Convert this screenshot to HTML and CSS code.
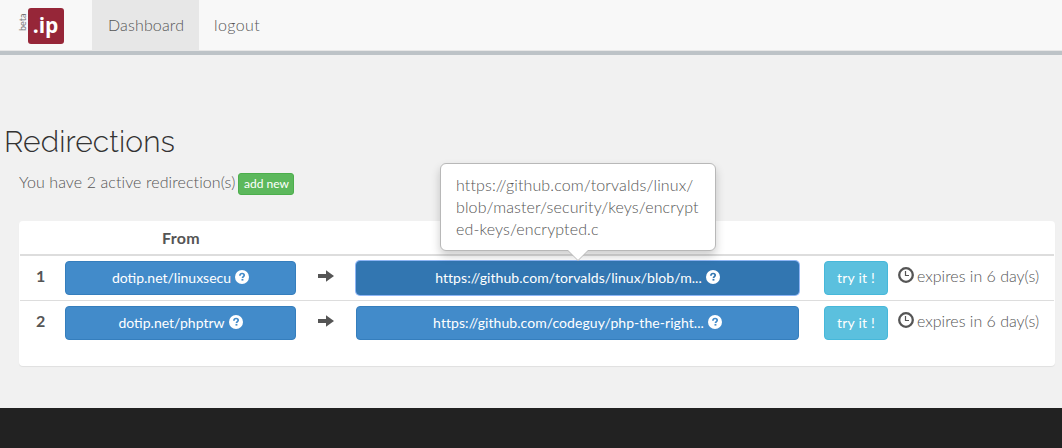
FILE: index.html
```html
<!DOCTYPE html>
<html lang="en">
<head>
<meta charset="utf-8">
<title>Redirections</title>
<link rel="stylesheet" href="styles.css">
</head>
<body>
<svg width="0" height="0" class="defs">
  <symbol id="help" viewBox="0 0 14 14"><circle cx="7" cy="7" r="7" fill="#fff"/><path d="M4.9 5.8C4.9 4.2 5.8 3.5 7.1 3.5c1.3 0 2.1.7 2.1 1.7 0 1.3-1.7 1.4-1.7 2.8" fill="none" stroke="currentColor" stroke-width="1.7"/><path d="M6.5 8.9h1.9v1.7H6.5z" fill="currentColor"/></symbol>
  <symbol id="arrow" viewBox="0 0 16 12"><path d="M0 4h8V0.200L16 6 8 11.800V8H0z" fill="#555"/></symbol>
  <symbol id="clock" viewBox="0 0 16 16"><circle cx="8" cy="8" r="6.800" fill="none" stroke="#555" stroke-width="2.300"/><path d="M7.500 4v4.500H11" fill="none" stroke="#555" stroke-width="1.200"/></symbol>
</svg>
<nav class="navbar">
  <a class="brand"><span class="beta">beta</span><span class="logo"><span class="logo-text">.ip</span></span></a>
  <a class="nav-item active"><span class="dash">Dashboard</span></a>
  <a class="nav-item"><span class="logout">logout</span></a>
</nav>
<main>
  <h1><span>Redirections</span></h1>
  <p class="summary"><span class="count">You have 2 active redirection(s)</span><a class="btn add">add new</a></p>
  <section class="card">
    <div class="row head"><span></span><span class="from">From</span></div>
    <div class="row">
      <b>1</b>
      <a class="btn primary"><span>dotip.net/linuxsecu</span><svg class="help"><use href="#help"/></svg></a>
      <svg class="arrow"><use href="#arrow"/></svg>
      <div class="target">
        <a class="btn primary focused"><span>https://github.com/torvalds/linux/blob/m...</span><svg class="help"><use href="#help"/></svg></a>
        <div class="popover">https://github.com/torvalds/linux/<br>blob/master/security/keys/encrypt<br>ed-keys/encrypted.c</div>
      </div>
      <a class="btn info">try it !</a>
      <div class="expires"><svg class="clock"><use href="#clock"/></svg><span>expires in 6 day(s)</span></div>
    </div>
    <div class="row last">
      <b>2</b>
      <a class="btn primary"><span>dotip.net/phptrw</span><svg class="help"><use href="#help"/></svg></a>
      <svg class="arrow"><use href="#arrow"/></svg>
      <div class="target">
        <a class="btn primary"><span>https://github.com/codeguy/php-the-right...</span><svg class="help"><use href="#help"/></svg></a>
      </div>
      <a class="btn info">try it !</a>
      <div class="expires"><svg class="clock"><use href="#clock"/></svg><span>expires in 6 day(s)</span></div>
    </div>
  </section>
</main>
<footer></footer>
</body>
</html>
```

FILE: styles.css
```css
* { box-sizing: border-box; }
body {
  margin: 0;
  height: 448px;
  display: flex;
  flex-direction: column;
  overflow: hidden;
  background: #f1f1f1;
  color: #555;
  font: 300 16px/22px Lato, "Liberation Sans", sans-serif;
  white-space: nowrap;
}
.defs { position: absolute; }
.navbar {
  height: 55px;
  display: flex;
  background: #f8f8f8;
  border-bottom: 4px solid #bdc3c7;
  box-shadow: inset 0 -1px #e7e7e7;
}
.brand { width: 92px; padding: 8px 0 0 18px; display: flex; }
.beta {
  width: 9.5px;
  height: 23px;
  writing-mode: vertical-rl;
  transform: rotate(180deg);
  font-size: 9px;
  font-weight: 400;
  line-height: 10px;
  color: #777;
}
.logo {
  width: 36px;
  height: 36px;
  border-radius: 3px;
  background: #962638;
  color: #fff;
  font: 700 21px/34px "Open Sans", sans-serif;
  text-align: center;
}
.nav-item { height: 50px; padding: 14px 15px; color: #555; }
.nav-item.active { width: 107px; padding-left: 16px; background: #e7e7e7; }
.dash { letter-spacing: .15px; }
.logout { letter-spacing: .4px; }
main { height: 353px; padding: 67px 7px 0 19px; }
h1 {
  margin: 0 0 0 -15px;
  height: 39px;
  font: 300 30px/39px Raleway, Lato, sans-serif;
  letter-spacing: .1px;
  color: #333;
}
.summary { margin: 10px 0 0; height: 24px; display: flex; align-items: flex-start; gap: 3px; }
.count { letter-spacing: .09px; }
.btn {
  display: flex;
  align-items: center;
  justify-content: center;
  gap: 4px;
  height: 34px;
  border: 1px solid;
  border-radius: 4px;
  color: #fff;
  font-size: 14px;
  font-weight: 400;
  line-height: 20px;
}
.btn.add {
  width: 56px;
  height: 22px;
  margin-top: 2px;
  border-radius: 3px;
  background: #5cb85c;
  border-color: #4cae4c;
  font-size: 12px;
}
.primary { background: #428bca; border-color: #357ebd; }
.focused { background: #3276b1; border-color: #3276b1; box-shadow: 0 0 0 1px #8db5f5; }
.target .primary { letter-spacing: .06px; }
.info { background: #5bc0de; border-color: #46b8da; letter-spacing: .2px; }
.card {
  height: 145px;
  margin-top: 26px;
  padding: 0 1px;
  background: #fff;
  border-radius: 4px;
  box-shadow: 0 1px 1px rgba(0, 0, 0, .07);
}
.row {
  height: 45px;
  display: grid;
  grid-template-columns: 45px 231px 60px 443px 25px 64px 10px 1fr;
  align-items: start;
  padding-top: 5px;
  border-bottom: 1px solid #ddd;
}
.row.last { border-bottom: 0; }
.row.head { height: 35px; padding-top: 6px; border-bottom: 2px solid #ddd; }
.from { padding-left: 1px; text-align: center; font-weight: 700; letter-spacing: .3px; }
.row b { padding: 4px 0 0 16px; font-weight: 700; }
.help { width: 14px; height: 14px; color: #428bca; margin-top: -3px; }
.focused .help { color: #3276b1; }
.arrow { width: 16px; height: 12px; margin: 9px 0 0 22px; }
.target { position: relative; }
.info { grid-column: 6; }
.expires { grid-column: 8; display: flex; align-items: flex-start; gap: 3px; padding-top: 4px; }
.clock { width: 16px; height: 16px; margin-top: 2px; }
.popover {
  position: absolute;
  left: 84px;
  bottom: 44px;
  width: 276px;
  height: 88px;
  padding: 10px 15px;
  border: 1px solid #b8b8b8;
  border-radius: 6px;
  background: #fff;
  box-shadow: 0 5px 10px rgba(0, 0, 0, .2);
  letter-spacing: .12px;
}
.popover::before, .popover::after {
  content: "";
  position: absolute;
  left: 127px;
  top: 87px;
  border: 10px solid transparent;
  border-top-color: #b8b8b8;
  border-bottom: 0;
}
.popover::after { top: 86px; border-top-color: #fff; }
footer { height: 40px; background: #222; }
```
